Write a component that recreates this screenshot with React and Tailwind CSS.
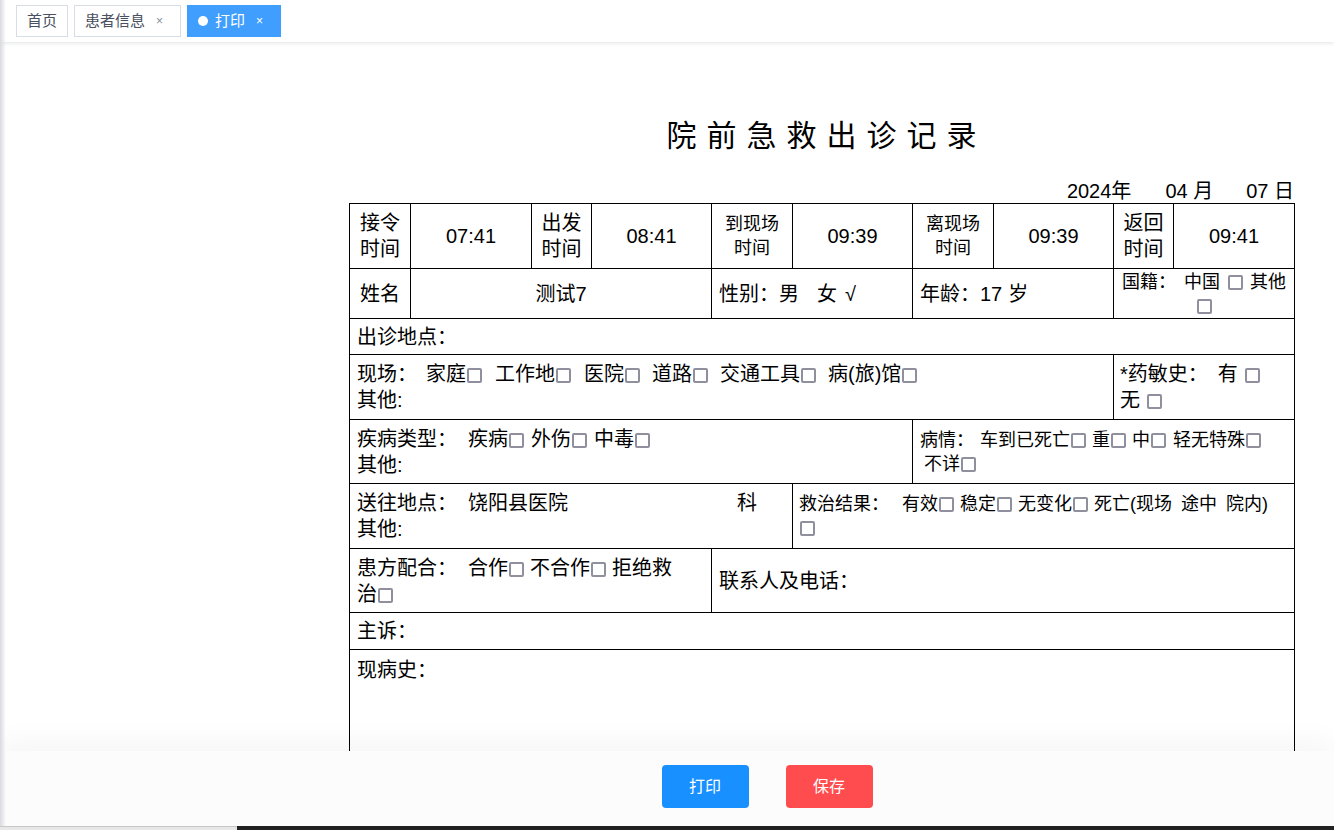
import React from "react";

const font = "font-['Liberation_Sans','Noto_Sans_CJK_SC',sans-serif]";

// gray square used as an empty checkbox mark
function Box({ className = "" }) {
  return (
    <span
      className={
        "inline-block w-[15px] h-[15px] border-2 border-[#8f8f9d] rounded-[2px] align-[-2px] ml-[1px] " +
        className
      }
    />
  );
}

function Tab({ label, active, closable }) {
  return (
    <div
      className={
        "h-[32px] flex items-center border text-[15px] " +
        (active
          ? "bg-[#409eff] border-[#409eff] text-white pl-[10px] pr-[17px]"
          : "bg-white border-[#d8dce5] text-[#495060] pl-[10px] " + (closable ? "pr-[17px]" : "pr-[10px]"))
      }
    >
      {active && <span className="w-[10px] h-[10px] rounded-full bg-white mr-[7px]" />}
      <span>{label}</span>
      {closable && (
        <span className={"ml-[11px] w-[7px] text-[12px] leading-none " + (active ? "text-white" : "text-[#8a8f99]")}>
          ×
        </span>
      )}
    </div>
  );
}

export default function App() {
  return (
    <div className={"relative w-[1334px] h-[830px] overflow-hidden bg-white flex flex-col text-black " + font}>
      {/* tags bar */}
      <div className="h-[42px] flex-shrink-0 bg-white flex items-center gap-[6px] pl-[16px] relative z-10 shadow-[0_1px_4px_rgba(0,21,41,0.12)]">
        <Tab label="首页" />
        <Tab label="患者信息" closable />
        <Tab label="打印" active closable />
      </div>

      {/* page */}
      <div className="flex-1 overflow-hidden pl-[349px]">
        <div className="w-[945px] pt-[71px]">
          <div className="text-center text-[30px] leading-[45px] tracking-[10px] pl-[10px]">
            院前急救出诊记录
          </div>
          <div className="mt-[21px] text-right text-[20px] leading-[24px]">
            <span>2024年</span>
            <span className="ml-[34px]">04 月</span>
            <span className="ml-[33px]">07 日</span>
          </div>
          <table className="w-[945px] table-fixed border-collapse text-[20px] leading-[26px]">
            <colgroup>
              <col className="w-[61px]" />
              <col className="w-[121px]" />
              <col className="w-[60px]" />
              <col className="w-[120px]" />
              <col className="w-[81px]" />
              <col className="w-[120px]" />
              <col className="w-[81px]" />
              <col className="w-[120px]" />
              <col className="w-[60px]" />
              <col className="w-[121px]" />
            </colgroup>
            <tbody>
              <tr className="h-[65px]">
                <td className="border border-black text-center">接令<br />时间</td>
                <td className="border border-black text-center">07:41</td>
                <td className="border border-black text-center">出发<br />时间</td>
                <td className="border border-black text-center">08:41</td>
                <td className="border border-black text-center text-[18px] leading-[24px]">到现场<br />时间</td>
                <td className="border border-black text-center">09:39</td>
                <td className="border border-black text-center text-[18px] leading-[24px]">离现场<br />时间</td>
                <td className="border border-black text-center">09:39</td>
                <td className="border border-black text-center">返回<br />时间</td>
                <td className="border border-black text-center">09:41</td>
              </tr>
              <tr className="h-[50px]">
                <td className="border border-black text-center">姓名</td>
                <td colSpan={3} className="border border-black text-center">测试7</td>
                <td colSpan={2} className="border border-black px-[7px]">
                  性别：男<span className="ml-[18px]">女</span>
                  <span className="ml-[8px]">√</span>
                </td>
                <td colSpan={2} className="border border-black px-[7px]">
                  年龄：17<span className="ml-[6px]">岁</span>
                </td>
                <td colSpan={2} className="border border-black text-center text-[18px] leading-[24px] px-[2px]">
                  国籍：<span className="ml-[8px]">中国</span>
                  <Box className="ml-[8px]" />
                  <span className="ml-[7px]">其他</span>
                  <br />
                  <Box />
                </td>
              </tr>
              <tr className="h-[36px]">
                <td colSpan={10} className="border border-black px-[7px]">出诊地点：</td>
              </tr>
              <tr className="h-[65px]">
                <td colSpan={8} className="border border-black px-[7px]">
                  现场：<span className="ml-[9px]">家庭</span><Box />
                  <span className="ml-[13px]">工作地</span><Box />
                  <span className="ml-[13px]">医院</span><Box />
                  <span className="ml-[12px]">道路</span><Box />
                  <span className="ml-[12px]">交通工具</span><Box />
                  <span className="ml-[12px]">病(旅)馆</span><Box />
                  <br />
                  其他:
                </td>
                <td colSpan={2} className="border border-black px-[6px]">
                  *药敏史：<span className="ml-[10px]">有</span>
                  <Box className="ml-[7px]" />
                  <br />
                  无<Box className="ml-[7px]" />
                </td>
              </tr>
              <tr className="h-[64px]">
                <td colSpan={6} className="border border-black px-[7px]">
                  疾病类型：<span className="ml-[11px]">疾病</span><Box />
                  <span className="ml-[7px]">外伤</span><Box />
                  <span className="ml-[7px]">中毒</span><Box />
                  <br />
                  其他:
                </td>
                <td colSpan={4} className="border border-black px-[7px] text-[18px] leading-[24px]">
                  病情：<span className="ml-[6px]">车到已死亡</span><Box />
                  <span className="ml-[6px]">重</span><Box />
                  <span className="ml-[6px]">中</span><Box />
                  <span className="ml-[7px]">轻无特殊</span><Box />
                  <br />
                  <span className="ml-[4px]">不详</span><Box />
                </td>
              </tr>
              <tr className="h-[65px]">
                <td colSpan={5} className="border border-black px-[7px]">
                  送往地点：<span className="ml-[11px]">饶阳县医院</span>
                  <span className="ml-[169px]">科</span>
                  <br />
                  其他:
                </td>
                <td colSpan={5} className="border border-black px-[6px] text-[18px] leading-[24px]">
                  救治结果：<span className="ml-[13px]">有效</span><Box />
                  <span className="ml-[6px]">稳定</span><Box />
                  <span className="ml-[6px]">无变化</span><Box />
                  <span className="ml-[6px] [word-spacing:4px]">死亡(现场 途中 院内)</span>
                  <br />
                  <Box />
                </td>
              </tr>
              <tr className="h-[64px]">
                <td colSpan={4} className="border border-black px-[7px]">
                  患方配合：<span className="ml-[11px]">合作</span><Box />
                  <span className="ml-[6px]">不合作</span><Box />
                  <span className="ml-[6px]">拒绝救</span>
                  <br />
                  治<Box />
                </td>
                <td colSpan={6} className="border border-black px-[7px]">联系人及电话：</td>
              </tr>
              <tr className="h-[37px]">
                <td colSpan={10} className="border border-black px-[7px]">主诉：</td>
              </tr>
              <tr className="h-[220px]">
                <td colSpan={10} className="border border-black px-[7px] pt-[7px] align-top">现病史：</td>
              </tr>
            </tbody>
          </table>
        </div>
      </div>

      {/* footer actions */}
      <div className="relative z-10 h-[75px] flex-shrink-0 bg-[#fcfcfc] shadow-[0_-12px_24px_rgba(0,0,0,0.035)] flex items-start justify-center pt-[14px] pl-[200px] gap-[37px]">
        <button className="w-[87px] h-[43px] rounded-[4px] bg-[#1890ff] text-white text-[16px]">打印</button>
        <button className="w-[87px] h-[43px] rounded-[4px] bg-[#ff4d4f] text-white text-[16px]">保存</button>
      </div>
      <div className="h-[4px] flex-shrink-0 flex">
        <div className="w-[237px] bg-[#e8e8e8] border-t border-[#c8c8c8]" />
        <div className="flex-1 bg-[#222222]" />
      </div>

      {/* left edge shadow */}
      <div className="absolute left-0 top-0 bottom-[4px] w-[6px] bg-gradient-to-r from-[#d9dadf] to-transparent z-20 pointer-events-none" />
    </div>
  );
}
